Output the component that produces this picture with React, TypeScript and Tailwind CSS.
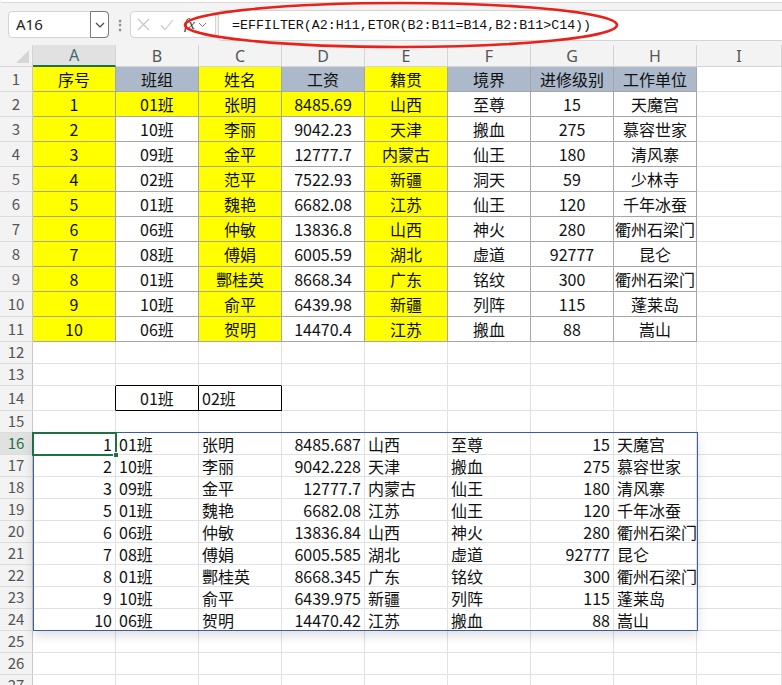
import React from 'react';

const FONT = { fontFamily: '"Noto Sans CJK SC", "Noto Sans", sans-serif' };

const topRows: string[][] = [
  ['序号', '班组', '姓名', '工资', '籍贯', '境界', '进修级别', '工作单位'],
  ['1', '01班', '张明', '8485.69', '山西', '至尊', '15', '天魔宫'],
  ['2', '10班', '李丽', '9042.23', '天津', '搬血', '275', '慕容世家'],
  ['3', '09班', '金平', '12777.7', '内蒙古', '仙王', '180', '清风寨'],
  ['4', '02班', '范平', '7522.93', '新疆', '洞天', '59', '少林寺'],
  ['5', '01班', '魏艳', '6682.08', '江苏', '仙王', '120', '千年冰蚕'],
  ['6', '06班', '仲敏', '13836.8', '山西', '神火', '280', '衢州石梁门'],
  ['7', '08班', '傅娟', '6005.59', '湖北', '虚道', '92777', '昆仑'],
  ['8', '01班', '酆桂英', '8668.34', '广东', '铭纹', '300', '衢州石梁门'],
  ['9', '10班', '俞平', '6439.98', '新疆', '列阵', '115', '蓬莱岛'],
  ['10', '06班', '贺明', '14470.4', '江苏', '搬血', '88', '嵩山'],
];

const spill: string[][] = [
  ['1', '01班', '张明', '8485.687', '山西', '至尊', '15', '天魔宫'],
  ['2', '10班', '李丽', '9042.228', '天津', '搬血', '275', '慕容世家'],
  ['3', '09班', '金平', '12777.7', '内蒙古', '仙王', '180', '清风寨'],
  ['5', '01班', '魏艳', '6682.08', '江苏', '仙王', '120', '千年冰蚕'],
  ['6', '06班', '仲敏', '13836.84', '山西', '神火', '280', '衢州石梁门'],
  ['7', '08班', '傅娟', '6005.585', '湖北', '虚道', '92777', '昆仑'],
  ['8', '01班', '酆桂英', '8668.345', '广东', '铭纹', '300', '衢州石梁门'],
  ['9', '10班', '俞平', '6439.975', '新疆', '列阵', '115', '蓬莱岛'],
  ['10', '06班', '贺明', '14470.42', '江苏', '搬血', '88', '嵩山'],
];

const LETTERS = ['A', 'B', 'C', 'D', 'E', 'F', 'G', 'H', 'I'];

type CellDef = { t?: string; cls: string };

const GRID = 'border-r-[#e1e1e1] border-b-[#e1e1e1]';
const TAB = 'border-r-[#a6a6a6] border-b-[#a6a6a6]';

function Cell({ c, last }: { c: CellDef; last?: boolean }) {
  return (
    <div
      className={`${last ? 'flex-1 min-w-0' : 'w-[83px] shrink-0'} h-full border-r border-b flex items-center whitespace-nowrap text-[16px] leading-none text-[#111] ${c.cls}`}
    >
      {c.t}
    </div>
  );
}

function Row({ n, h, cells, active }: { n: number; h: string; cells: CellDef[]; active?: boolean }) {
  return (
    <div className={`flex ${h}`}>
      <div
        className={`w-[33px] shrink-0 h-full border-r border-b border-r-[#c9c9c9] border-b-[#dcdcdc] flex items-center justify-center text-[15px] ${
          active ? 'bg-[#e1e1e1] text-[#1e7145]' : 'bg-[#f3f3f3] text-[#555]'
        }`}
      >
        {n}
      </div>
      {cells.map((c, i) => (
        <Cell key={i} c={c} last={i === cells.length - 1} />
      ))}
    </div>
  );
}

const empty = (): CellDef[] => LETTERS.map(() => ({ cls: GRID }));

function topCells(r: number): CellDef[] {
  const row = topRows[r];
  const cells = row.map((t, i) => {
    let bg = '';
    if (r === 0) bg = [0, 2, 4].includes(i) ? 'bg-[#ffff00]' : 'bg-[#acb9ca]';
    else if (i === 0 || i === 2 || i === 4) bg = 'bg-[#ffff00]';
    else if ((i === 1 || i === 3) && r === 1) bg = 'bg-[#ffff00]';
    return { t, cls: `${TAB} ${bg} justify-center` };
  });
  return [...cells, { cls: GRID }];
}

function spillCells(r: number): CellDef[] {
  const row = spill[r];
  const cells = row.map((t, i) => {
    const right = i === 0 || i === 3 || i === 6;
    return { t, cls: `${GRID} ${right ? 'justify-end pr-[3px]' : 'justify-start pl-[3px]'}` };
  });
  return [...cells, { cls: GRID }];
}

function row13(): CellDef[] {
  const c = empty();
  c[1] = { cls: 'border-r-[#e1e1e1] border-b-black' };
  c[2] = { cls: 'border-r-[#e1e1e1] border-b-black' };
  return c;
}

function row14(): CellDef[] {
  const c = empty();
  c[0] = { cls: 'border-r-black border-b-[#e1e1e1]' };
  c[1] = { t: '01班', cls: 'border-r-black border-b-black justify-center' };
  c[2] = { t: '02班', cls: 'border-r-black border-b-black justify-start pl-[3px]' };
  return c;
}

function FormulaBar() {
  return (
    <div className="h-[45px] bg-[#f3f3f3] relative">
      <div className="h-[3px] border-b border-[#d9d9d9] ml-0 rounded-bl-[6px] bg-white" />
      <div className="flex items-start pt-[8px] pl-[8px]">
        <div className="w-[101px] h-[27px] bg-white border border-[#d4d4d4] rounded-[4px] flex items-center">
          <span className="pl-[7px] text-[15px] text-[#222] flex-1" style={{ fontFamily: '"Noto Sans", sans-serif' }}>
            A16
          </span>
          <div className="w-[19px] h-[27px] -mr-px border border-[#7a7a7a] rounded-r-[4px] flex items-center justify-center">
            <svg width="10" height="6" viewBox="0 0 10 6">
              <path d="M1 1l4 4 4-4" fill="none" stroke="#444" strokeWidth="1.2" />
            </svg>
          </div>
        </div>
        <div className="w-[21px] h-[27px] flex items-center justify-center text-[#8a8a8a] text-[14px] font-bold">⋮</div>
        <div className="w-[86px] h-[27px] bg-white border border-[#d4d4d4] rounded-[4px] flex items-center pl-[6px] gap-[10px]">
          <svg width="13" height="13" viewBox="0 0 13 13">
            <path d="M1 1l11 11M12 1L1 12" stroke="#c4c4c4" strokeWidth="1.1" />
          </svg>
          <svg width="14" height="12" viewBox="0 0 14 12">
            <path d="M1 6.5l4 4L13 1" fill="none" stroke="#c4c4c4" strokeWidth="1.1" />
          </svg>
          <div className="flex items-center gap-[3px]">
            <span className="italic text-[15px] text-[#333] leading-none" style={{ fontFamily: '"Liberation Serif", serif' }}>
              fx
            </span>
            <svg width="9" height="6" viewBox="0 0 9 6">
              <path d="M1 1l3.5 3.5L8 1" fill="none" stroke="#777" strokeWidth="1" />
            </svg>
          </div>
        </div>
        <div className="flex-1 ml-[2px] -mt-[1px] h-[31px] bg-white border border-r-0 border-[#d4d4d4] rounded-l-[4px] flex items-center pl-[13px]">
          <span className="text-[13.3px] text-[#111]" style={{ fontFamily: '"Liberation Mono", monospace' }}>
            =EFFILTER(A2:H11,ETOR(B2:B11=B14,B2:B11&gt;C14))
          </span>
        </div>
      </div>
    </div>
  );
}

function ColumnHeader() {
  return (
    <div className="flex h-[22px] bg-[#f3f3f3]">
      <div className="w-[33px] shrink-0 h-full border-r border-b border-[#d4d4d4] flex items-end justify-end pr-[3px] pb-[3px]">
        <svg width="13" height="13" viewBox="0 0 13 13">
          <path d="M13 0L13 13L0 13Z" fill="#d6d6d6" />
        </svg>
      </div>
      {LETTERS.map((l, i) => (
        <div
          key={l}
          className={`${i === 8 ? 'flex-1' : 'w-[83px] shrink-0'} h-full border-r border-[#d4d4d4] flex items-center justify-center text-[16px] ${
            i === 0 ? 'bg-[#e1e1e1] border-b-2 border-b-[#1e7145] text-[#3b6e73]' : 'border-b text-[#555]'
          }`}
          style={{ fontFamily: '"Noto Sans", sans-serif' }}
        >
          {l}
        </div>
      ))}
    </div>
  );
}

export default function App() {
  return (
    <div className="relative w-[782px] h-[685px] overflow-hidden bg-white" style={FONT}>
      <FormulaBar />
      <ColumnHeader />
      {topRows.map((_, r) => (
        <Row key={r} n={r + 1} h="h-[25px]" cells={topCells(r)} />
      ))}
      <Row n={12} h="h-[22px]" cells={empty()} />
      <Row n={13} h="h-[22px]" cells={row13()} />
      <Row n={14} h="h-[25px]" cells={row14()} />
      <Row n={15} h="h-[22px]" cells={empty()} />
      {spill.map((_, r) => (
        <Row key={r} n={16 + r} h="h-[22px]" cells={spillCells(r)} active={r === 0} />
      ))}
      <Row n={25} h="h-[22px]" cells={empty()} />
      <Row n={26} h="h-[22px]" cells={empty()} />
      <Row n={27} h="h-[22px]" cells={empty()} />

      {/* spill range outline */}
      <div className="absolute left-[33px] top-[432px] w-[665px] h-[199px] border border-[#3a5ea6] shadow-[0_5px_10px_rgba(0,0,0,0.12)] pointer-events-none" />
      {/* active cell */}
      <div className="absolute left-[32px] top-[432px] w-[85px] h-[24px] border-2 border-[#1e7145] pointer-events-none" />
      <div className="absolute left-[113px] top-[452px] w-[6px] h-[6px] bg-[#1e7145] border border-white pointer-events-none" />
      {/* red annotation ellipse */}
      <svg className="absolute left-0 top-0 pointer-events-none" width="782" height="60">
        <ellipse cx="401" cy="25" rx="216" ry="22" fill="none" stroke="#e8211b" strokeWidth="2.6" />
      </svg>
    </div>
  );
}
